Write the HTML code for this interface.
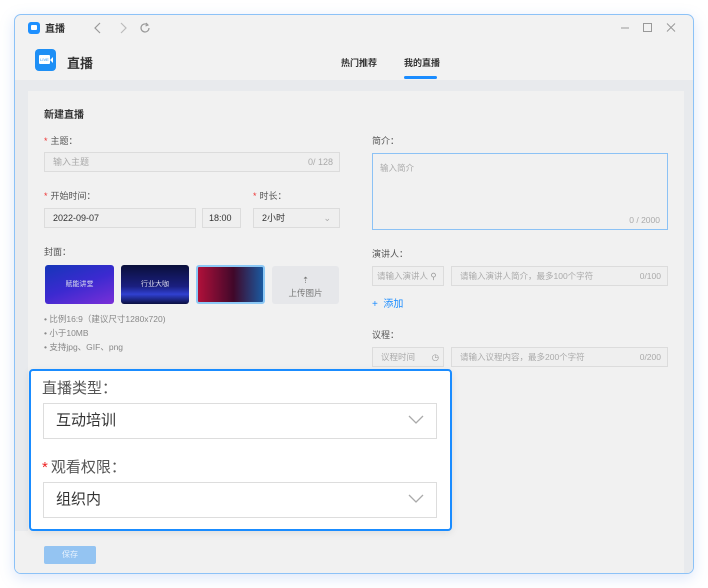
<!DOCTYPE html>
<html><head><meta charset="utf-8"><style>
*{margin:0;padding:0;box-sizing:border-box}
body{width:708px;height:588px;background:#fff;font-family:"Liberation Sans","Noto Sans CJK SC",sans-serif;position:relative;overflow:hidden;color:#333}
.a{position:absolute}
.win{left:14px;top:14px;width:680px;height:560px;border:1px solid #8cc2f7;border-radius:7px;background:#f2f2f2;overflow:hidden;box-shadow:0 4px 14px rgba(120,160,230,.25)}
.lbl{font-size:9px;color:#555}
.st{color:#e33;margin-right:3px}
.inp{border:1px solid #dcdcdc;background:#efefef;height:20px;font-size:9px;color:#aaa;line-height:18px;padding-left:8px}
.hint{font-size:8.5px;color:#888}
</style></head><body>
<div class="a win">
  <div class="a" style="left:13px;top:7px;width:12px;height:12px;background:#1e90ff;border-radius:3px"></div>
  <div class="a" style="left:16px;top:10px;width:6px;height:5px;background:#fff;border-radius:1px"></div>
  <div class="a" style="left:30px;top:5px;font-size:10px;font-weight:bold;color:#333">直播</div>
  <svg class="a" style="left:78px;top:6px" width="70" height="14"><path d="M7 2 L2 7 L7 12" stroke="#999" fill="none" stroke-width="1.2"/><path d="M28 2 L33 7 L28 12" stroke="#bbb" fill="none" stroke-width="1.2"/><path d="M54 3.5 A4 4 0 1 0 56 7" stroke="#999" fill="none" stroke-width="1.2"/><path d="M53 2 L55 4 L52.5 5" stroke="#999" fill="none" stroke-width="1.1"/></svg>
  <svg class="a" style="left:604px;top:6px" width="70" height="14"><path d="M2 7 H10" stroke="#999" stroke-width="1"/><rect x="24.5" y="2.5" width="8" height="8" stroke="#999" fill="none"/><path d="M48 2.5 L56 10.5 M56 2.5 L48 10.5" stroke="#999" stroke-width="1"/></svg>
  <div class="a" style="left:20px;top:34px;width:21px;height:22px;background:#1e8ff5;border-radius:4px"></div>
  <div class="a" style="left:24px;top:40px;width:11px;height:9px;background:#fff;border-radius:1px;font-size:4px;color:#1e8ff5;line-height:9px;text-align:center">LIVE</div>
  <div class="a" style="left:35px;top:42px;width:0;height:0;border-top:3px solid transparent;border-bottom:3px solid transparent;border-right:3px solid #fff;"></div>
  <div class="a" style="left:52px;top:38px;font-size:13px;font-weight:bold;color:#333">直播</div>
  <div class="a" style="left:326px;top:41px;font-size:9px;font-weight:bold;color:#333">热门推荐</div>
  <div class="a" style="left:389px;top:41px;font-size:9px;font-weight:bold;color:#333">我的直播</div>
  <div class="a" style="left:389px;top:61px;width:33px;height:3px;background:#1a8cff;border-radius:2px"></div>
  <div class="a" style="left:0;top:65px;width:680px;height:495px;background:#e8eaed"></div>
  <div class="a" style="left:13px;top:76px;width:656px;height:440px;background:#f1f1f1"></div>
  <div class="a" style="left:0;top:516px;width:669px;height:44px;background:#f1f1f1"></div>
  <div class="a" style="left:29px;top:531px;width:52px;height:18px;background:#94c4f2;border-radius:2px;color:#e8f2fd;font-size:8px;text-align:center;line-height:18px">保存</div>

  <div class="a" style="left:29px;top:91px;font-size:10px;font-weight:bold;color:#333">新建直播</div>
  <div class="a lbl" style="left:29px;top:119px"><span class="st">*</span>主题：</div>
  <div class="a inp" style="left:29px;top:137px;width:296px">输入主题<span style="float:right;margin-right:6px;color:#aaa">0/ 128</span></div>
  <div class="a lbl" style="left:29px;top:174px"><span class="st">*</span>开始时间：</div>
  <div class="a inp" style="left:29px;top:193px;width:152px;color:#333">2022-09-07</div>
  <div class="a inp" style="left:187px;top:193px;width:39px;color:#333;padding-left:6px">18:00</div>
  <div class="a lbl" style="left:238px;top:174px"><span class="st">*</span>时长：</div>
  <div class="a inp" style="left:238px;top:193px;width:87px;color:#333">2小时<span style="float:right;margin-right:8px;color:#aaa">⌄</span></div>
  <div class="a lbl" style="left:29px;top:230px">封面：</div>
  <div class="a" style="left:30px;top:250px;width:69px;height:39px;border-radius:3px;background:linear-gradient(160deg,#1536b8,#3b2ad0 50%,#7a2fd8);color:#dde;font-size:7px;text-align:center;line-height:39px">赋能讲堂</div>
  <div class="a" style="left:106px;top:250px;width:68px;height:39px;border-radius:3px;background:linear-gradient(180deg,#0a0f3a,#1a1f80 55%,#3040d0 75%,#0a0f40);color:#dde;font-size:7px;text-align:center;line-height:39px">行业大咖</div>
  <div class="a" style="left:181px;top:250px;width:69px;height:39px;border-radius:3px;border:2px solid #8cc8f5;background:linear-gradient(90deg,#b0103a,#40082a 55%,#1a5aa0)"></div>
  <div class="a" style="left:257px;top:251px;width:67px;height:38px;border-radius:3px;background:#e6e7ea;color:#777;font-size:8.5px;text-align:center;padding-top:8px;line-height:13px">⇡<br>上传图片</div>
  <div class="a hint" style="left:29px;top:297px;line-height:14px">• 比例16:9（建议尺寸1280x720)<br>• 小于10MB<br>• 支持jpg、GIF、png</div>

  <div class="a lbl" style="left:357px;top:119px">简介：</div>
  <div class="a" style="left:357px;top:138px;width:296px;height:77px;border:1px solid #8cc2f5;font-size:8.5px;color:#aaa;padding:8px 7px">输入简介<div class="a" style="right:7px;bottom:4px">0 / 2000</div></div>
  <div class="a lbl" style="left:357px;top:232px">演讲人：</div>
  <div class="a inp" style="left:357px;top:251px;width:72px;padding-left:4px;font-size:8.5px">请输入演讲人 <span style="color:#999">⚲</span></div>
  <div class="a inp" style="left:436px;top:251px;width:217px;font-size:8.5px">请输入演讲人简介，最多100个字符<span style="float:right;margin-right:6px">0/100</span></div>
  <div class="a" style="left:357px;top:280px;font-size:10px;color:#1a8cff">+&nbsp; 添加</div>
  <div class="a lbl" style="left:357px;top:313px">议程：</div>
  <div class="a inp" style="left:357px;top:332px;width:72px;font-size:8.5px">议程时间 <span style="float:right;margin-right:4px;color:#999">◷</span></div>
  <div class="a inp" style="left:436px;top:332px;width:217px;font-size:8.5px">请输入议程内容，最多200个字符<span style="float:right;margin-right:6px">0/200</span></div>
</div>
<div class="a" style="left:29px;top:369px;width:423px;height:162px;background:#fff;border:2px solid #1a8cff;border-radius:4px;box-shadow:0 2px 8px rgba(0,0,0,.08)"></div>
<div class="a" style="left:42px;top:377px;font-size:15px;color:#555">直播类型：</div>
<div class="a" style="left:43px;top:403px;width:394px;height:36px;border:1px solid #ddd;font-size:15px;color:#333;line-height:34px;padding-left:12px">互动培训</div>
<svg class="a" style="left:408px;top:415px" width="16" height="10"><path d="M1 1 L8 8 L15 1" stroke="#aaa" fill="none" stroke-width="1.3"/></svg>
<div class="a" style="left:42px;top:456px;font-size:15px;color:#555"><span style="color:#e22;margin-right:3px">*</span>观看权限：</div>
<div class="a" style="left:43px;top:482px;width:394px;height:36px;border:1px solid #ddd;font-size:15px;color:#333;line-height:34px;padding-left:12px">组织内</div>
<svg class="a" style="left:408px;top:494px" width="16" height="10"><path d="M1 1 L8 8 L15 1" stroke="#aaa" fill="none" stroke-width="1.3"/></svg>
</body></html>
